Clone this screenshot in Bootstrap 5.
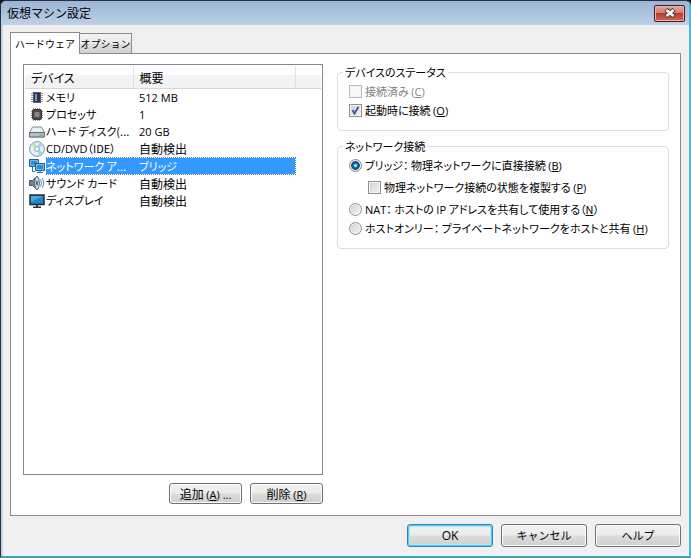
<!DOCTYPE html>
<html lang="ja">
<head>
<meta charset="utf-8">
<meta name="viewport" content="width=device-width, initial-scale=1">
<title>仮想マシン設定</title>
<link href="https://cdn.jsdelivr.net/npm/bootstrap@5.3.0/dist/css/bootstrap.min.css" rel="stylesheet">
<style>
body{font-family:"Open Sans","Noto Sans CJK JP",sans-serif;font-size:11px;line-height:17px;color:#000;background:#10141c}
.jp{font-family:"Noto Sans CJK JP",sans-serif;font-size:12px;font-feature-settings:"palt"}
.dialog{background:#f0f0f0;border:1px solid #29303a;border-right:2px solid #49bcd8;border-bottom:2px solid #3aa5ba;border-radius:6px 6px 0 0;overflow:hidden;box-shadow:inset 2px 0 #c3d5ea}
.titlebar{height:24px;background:linear-gradient(#9ab5d5,#bdd1e8);padding:0 4px 0 6px}
.title-text{font-family:"Noto Sans CJK JP",sans-serif;font-size:12px;line-height:24px}
.close-btn{width:31px;height:17px;border:1px solid #4a1a1c;border-radius:2px;background:linear-gradient(#e5a79c,#d0796b 48%,#b83a28 50%,#cf6a56);box-shadow:inset 0 0 0 1px #e9b5ac;line-height:0}
.client{padding:7px 8px 9px 9px}
.tabs .tab{min-width:52px;border:1px solid #898c95;border-bottom:0;height:20px;padding:0;background:linear-gradient(#f3f3f3,#ececec 50%,#dcdcdc 51%,#d2d2d2);color:#000;font-size:10px;line-height:19px}
.tabs .tab.active{min-width:70px;height:22px;background:#fff;margin-bottom:-1px;z-index:1;position:relative}
.tabs .tab+.tab{border-left:0}
.panel{background:#fff;border:1px solid #898c95;padding:10px 11px 11px 12px}
.left{flex:300 1 0;min-width:0}
.right{flex:332 1 0;min-width:0;margin-left:14px;font-size:11px}
.listbox{border:1px solid #828790;padding:1px}
.devices{table-layout:fixed;width:100%}
.devices th{height:22px;font-weight:400;padding:2px 0 0 6px;border-bottom:1px solid #d5d5d5;border-right:1px solid #dfe1e4;background:linear-gradient(#fff 40%,#f3f4f6 42%,#f1f2f4)}
.devices th:last-child{border-right:0}
.devices .c-icon{width:21px}
.devices .c-name{width:87px}
.devices .c-info{width:162px}
.devices td{height:17px;padding:0;white-space:nowrap;overflow:hidden;line-height:17px}
.devices td:nth-child(2),.devices .kana{font-size:11px}
.devices td:nth-child(3){padding-left:6px}
.devices td:first-child{padding-left:4px;line-height:0}
.devices .sel td:nth-child(2),.devices .sel td:nth-child(3){background:#3399ff;color:#fff;border-top:1px dotted #6d7f96;border-bottom:1px dotted #6d7f96;line-height:15px}
.devices .sel td:nth-child(3){border-right:1px dotted #6d7f96}
.devices .gap-row td{height:1px}
.push{height:21px;border:1px solid #707070;border-radius:3px;background:linear-gradient(#f2f2f2,#ebebeb 49%,#dddddd 51%,#cfcfcf);box-shadow:inset 0 0 0 1px #fbfbfb;padding:0;line-height:17px;color:#000}
.push.small-push{width:73px}
.push.wide-push{width:86px;height:23px;font-size:11px}
.push.ok{border-color:#3c7fb1;box-shadow:inset 0 0 0 1px #46d2f5,inset 0 0 0 2px #b5e6f6;font-size:12px}
.group{border:1px solid #d5dfe5;border-radius:4px;padding:0 11px 10px;margin:0;min-width:0}
.group+.group{margin-top:7px}
.group legend{float:none;width:auto;font-size:11px;line-height:16px;margin:0 0 2px -6px;padding:0 2px}
.opt{height:19px;gap:3px;white-space:nowrap}
.opt.sub-opt{margin:3px 0 3px 19px}
.ctl{appearance:none;width:13px;height:13px;margin:0;flex:none;border:1px solid #8e8f8f;box-shadow:inset 0 0 0 1px #f4f4f4;background:linear-gradient(135deg,#cbcfd5,#f6f6f6)}
.ctl[type=radio]{border-radius:50%}
.ctl[type=radio]:checked{border-color:#7c868e;background:radial-gradient(circle at 50% 50%,#8ce0f8 0 1px,#1c79ae 2px,#0e3a5c 4px,#eef2f5 5px)}
.ctl[type=checkbox]:checked{background:url("data:image/svg+xml,%3Csvg xmlns='http://www.w3.org/2000/svg' viewBox='0 0 11 11'%3E%3Cpath d='M2.5 5l2 3.5L8.5 1.8' fill='none' stroke='%23405aa5' stroke-width='2'/%3E%3C/svg%3E"),linear-gradient(135deg,#cbcfd5,#f6f6f6)}
.ctl:disabled{border-color:#b9b9b9;background:#f8f8f8}
.off{color:#838383}
.k{font-family:"Open Sans",sans-serif;font-size:11px}
</style>
<script src="https://cdn.jsdelivr.net/npm/bootstrap@5.3.0/dist/js/bootstrap.bundle.min.js"></script>
</head>
<body>
<main class="dialog d-flex flex-column min-vh-100">
<header class="titlebar d-flex justify-content-between align-items-center flex-shrink-0">
<h1 class="title-text m-0 fw-normal">仮想マシン設定</h1>
<button type="button" class="close-btn p-0" aria-label="閉じる"><svg width="12" height="10" viewBox="0 0 12 10"><path d="M2 1.500l8 7M10 1.500l-8 7" stroke="#513b43" stroke-width="4.500"/><path d="M2.500 2l7 6M9.500 2l-7 6" stroke="#fff" stroke-width="2.500"/></svg></button>
</header>
<div class="client d-flex flex-column flex-grow-1">
<div class="tabs d-flex align-items-end jp" role="tablist">
<button type="button" class="tab active" role="tab" aria-selected="true">ハードウェア</button>
<button type="button" class="tab" role="tab" aria-selected="false">オプション</button>
</div>
<section class="panel d-flex flex-grow-1" role="tabpanel">
<div class="left d-flex flex-column">
<div class="listbox flex-grow-1">
<table class="devices jp">
<colgroup><col class="c-icon"><col class="c-name"><col class="c-info"><col></colgroup>
<thead><tr><th colspan="2">デバイス</th><th>概要</th><th></th></tr></thead>
<tbody>
<tr class="gap-row"><td colspan="4"></td></tr>
<tr><td><svg width="16" height="16" viewBox="0 0 16 16"><path d="M2 3.500h12M2 5.500h12M2 7.500h12M2 9.500h12M2 11.500h12" stroke="#b09a62"/><rect x="4.500" y="2.500" width="7" height="10" fill="#2b3157" stroke="#555a80"/><path d="M6 4h2v7H6z" fill="#8790b8"/></svg></td><td>メモリ</td><td class="k">512 MB</td><td></td></tr>
<tr><td><svg width="16" height="16" viewBox="0 0 16 16"><path d="M4.500 1v13M6.500 1v13M8.500 1v13M10.500 1v13M2 4.500h12M2 6.500h12M2 8.500h12M2 10.500h12" stroke="#b09a62"/><rect x="3.500" y="2.500" width="9" height="10" rx="1.500" fill="#4d494c" stroke="#3b3639"/><path d="M5.500 5h5v5h-5z" fill="#8a8686"/></svg></td><td>プロセッサ</td><td class="k">1</td><td></td></tr>
<tr><td><svg width="16" height="16" viewBox="0 0 16 16"><path d="M3.500 3h9l3 5.500V13H.5V8.500z" fill="#eef1f4" stroke="#7d8993"/><path d="M.5 8.500h15V13H.5z" fill="#b4bec7" stroke="#5f6d79"/><path d="M10.500 11h3.500" stroke="#43d13a" stroke-width="1.500"/></svg></td><td>ハード ディスク(...</td><td class="k">20 GB</td><td></td></tr>
<tr><td><svg width="16" height="16" viewBox="0 0 16 16"><circle cx="8" cy="8" r="7.400" fill="#e2f0f7" stroke="#6c97b6"/><path d="M8 8L2 4.500a7 7 0 0 1 4-3.200z" fill="#c9e6a8"/><path d="M8 8l6 3.500a7 7 0 0 1-4 3.200z" fill="#9fdcd8"/><path d="M8 8l2-6.700a7 7 0 0 1 4 3.200z" fill="#b3d4f0"/><circle cx="8" cy="8" r="2.400" fill="#fff" stroke="#7ea2ba"/></svg></td><td><span class="k">CD/DVD</span>（IDE）</td><td>自動検出</td><td></td></tr>
<tr class="sel" aria-selected="true"><td><svg width="16" height="16" viewBox="0 0 16 16"><path d="M.5 1.500h9v7h-9z" fill="#2a8ad4" stroke="#1b5d97"/><path d="M1.500 2.500h7v5h-7z" fill="none" stroke="#79bff0"/><path d="M6.500 5.500h9v7h-9z" fill="#2a8ad4" stroke="#1b5d97"/><path d="M7.500 6.500h7v5h-7z" fill="none" stroke="#79bff0"/><path d="M3.500 9v4.500H6M8 14.500h6M11 13v1" fill="none" stroke="#1b6fb3"/></svg></td><td>ネットワーク ア...</td><td class="kana">ブリッジ</td><td></td></tr>
<tr><td><svg width="16" height="16" viewBox="0 0 16 16"><path d="M.5 5.500h3l4.500-4v13l-4.500-4h-3z" fill="#6f8498" stroke="#3f5568"/><ellipse cx="8" cy="8" rx="2.300" ry="6.500" fill="#d3dee8" stroke="#4b6174"/><ellipse cx="8" cy="8" rx="1" ry="2.500" fill="#4b6174"/><path d="M11.500 4.500q2 3.500 0 7M13.500 3q2.500 5 0 10" fill="none" stroke="#3c93d6"/></svg></td><td>サウンド カード</td><td>自動検出</td><td></td></tr>
<tr><td><svg width="16" height="16" viewBox="0 0 16 16"><path d="M1 2h14v9.500H1z" fill="#2484cc" stroke="#222b33" stroke-width="1.500"/><path d="M2 3h12L2 9z" fill="#4ba6e4"/><path d="M7 12h2v2H7zM4 13.500h8V15H4z" fill="#2d373f"/></svg></td><td>ディスプレイ</td><td>自動検出</td><td></td></tr>
</tbody>
</table>
</div>
<div class="d-flex justify-content-end gap-2 pt-2 jp">
<button type="button" class="push small-push">追加 <span class="k">(<u>A</u>) ...</span></button>
<button type="button" class="push small-push">削除 <span class="k">(<u>R</u>)</span></button>
</div>
</div>
<div class="right jp">
<fieldset class="group">
<legend>デバイスのステータス</legend>
<div class="opt d-flex align-items-center off"><input class="ctl" type="checkbox" id="c1" disabled><label for="c1">接続済み <span class="k">(<u>C</u>)</span></label></div>
<div class="opt d-flex align-items-center"><input class="ctl" type="checkbox" id="c2" checked><label for="c2">起動時に接続 <span class="k">(<u>O</u>)</span></label></div>
</fieldset>
<fieldset class="group">
<legend>ネットワーク接続</legend>
<div class="opt d-flex align-items-center"><input class="ctl" type="radio" name="net" id="r1" checked><label for="r1">ブリッジ： 物理ネットワークに直接接続 <span class="k">(<u>B</u>)</span></label></div>
<div class="opt sub-opt d-flex align-items-center"><input class="ctl" type="checkbox" id="c3"><label for="c3">物理ネットワーク接続の状態を複製する <span class="k">(<u>P</u>)</span></label></div>
<div class="opt d-flex align-items-center"><input class="ctl" type="radio" name="net" id="r2"><label for="r2"><span class="k">NAT</span>： ホストの <span class="k">IP</span> アドレスを共有して使用する（<u>N</u>）</label></div>
<div class="opt d-flex align-items-center"><input class="ctl" type="radio" name="net" id="r3"><label for="r3">ホストオンリー： プライベートネットワークをホストと共有 <span class="k">(<u>H</u>)</span></label></div>
</fieldset>
</div>
</section>
<footer class="d-flex justify-content-end gap-2 jp pt-2">
<button type="button" class="push wide-push ok k">OK</button>
<button type="button" class="push wide-push">キャンセル</button>
<button type="button" class="push wide-push">ヘルプ</button>
</footer>
</div>
</main>
</body>
</html>
